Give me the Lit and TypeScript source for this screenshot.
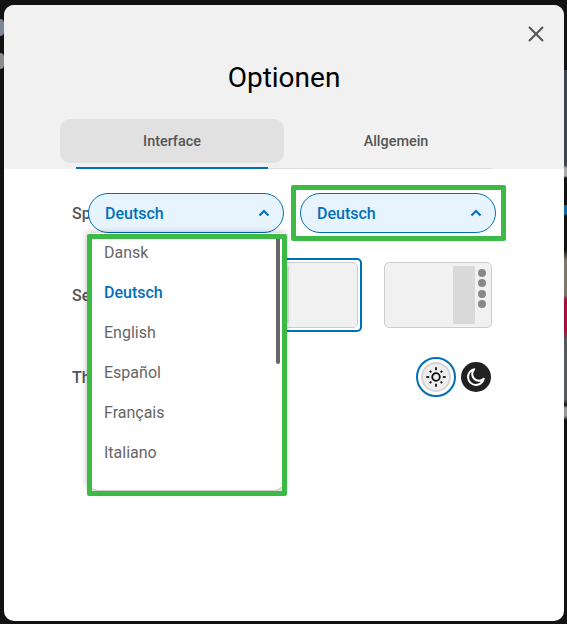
import { LitElement, html, css, svg } from "lit";
import { customElement } from "lit/decorators.js";

const chevron = html`<svg class="chev" width="12" height="8" viewBox="0 0 12 8"><path d="M1.500 6.500 6 2l4.500 4.500" fill="none" stroke="#0070bb" stroke-width="2"/></svg>`;

const rays = [0, 45, 90, 135, 180, 225, 270, 315].map((a) =>
  a % 90 === 0
    ? svg`<line x1="10" y1="3.200" x2="10" y2="0.300" transform="rotate(${a} 10 10)" stroke="#111" stroke-width="1.800"/>`
    : svg`<line x1="10" y1="3.400" x2="10" y2="1.200" transform="rotate(${a} 10 10)" stroke="#111" stroke-width="1.800"/>`
);

@customElement("app-root")
export class AppRoot extends LitElement {
  static styles = css`
    :host { display: block; width: 567px; height: 624px; position: relative; overflow: hidden; background: #121212; font-family: Roboto, sans-serif; }
    .strip { position: absolute; top: 0; right: 0; width: 3px; height: 624px;
      background: linear-gradient(#121212 0 70px, #3a444c 70px 165px, #aaa 168px 176px, #111 178px 205px, #0a6a9c 205px 214px, #111 216px 250px, #7c7666 260px 295px, #a50f3c 300px 330px, #55585c 340px 400px, #111 405px, #999 408px 416px, #111 420px); }
    .bit { position: absolute; left: 0; width: 4px; background: #7c8792; }
    .bit1 { top: 19px; height: 17px; border-radius: 0 4px 4px 0; }
    .bit2 { top: 53px; height: 16px; border-radius: 0 8px 8px 0; background: #8a8f8a; }
    .modal { position: absolute; left: 4px; top: 5px; width: 560px; height: 616px; background: #fff; border-radius: 10px; overflow: hidden; }
    .head { height: 164px; background: #f1f1f1; position: relative; display: flex; flex-direction: column; align-items: center; }
    .close { position: absolute; top: 20px; right: 19px; width: 18px; height: 18px; }
    h1 { margin: 56px 0 0; height: 34px; font-size: 28px; line-height: 34px; font-weight: 400; color: #000; }
    .tabs { margin-top: 24px; display: flex; width: 448px; height: 50px; position: relative; }
    .tabs::after { content: ""; position: absolute; left: 16px; right: 16px; bottom: 0; height: 1px; background: #ddd; }
    .tab { flex: 1; position: relative; font-size: 14.400px; font-weight: 500; color: #555; }
    .tab span { height: 44px; display: flex; align-items: center; justify-content: center; border-radius: 10px; }
    .tab.on::after { content: ""; position: absolute; left: 16px; right: 16px; bottom: 0; height: 2.500px; background: #0070b5; z-index: 1; }
    .tab.on span { background: #e1e1e1; }
    .body { padding: 24px 68px 0; display: flex; flex-direction: column; gap: 25px; }
    .row { display: flex; justify-content: space-between; align-items: center; }
    .label { font-size: 16px; font-weight: 500; color: #555; }
    .select { width: 196px; height: 40px; box-sizing: border-box; border: 1px solid #0070b5; border-bottom-width: 1.500px; border-radius: 20px; background: #e8f4fd; color: #0070bb; font-size: 16px; font-weight: 500; display: flex; align-items: center; justify-content: space-between; padding: 0 13px 0 16px; }
    .previews { display: flex; gap: 18px; }
    .item { box-sizing: border-box; width: 116px; height: 74px; padding: 2px; border: 2px solid transparent; border-radius: 5px; }
    .item.on { border-color: #0070b5; }
    .preview { height: 100%; box-sizing: border-box; border: 1px solid #ccc; border-radius: 5px; background: #f1f1f1; display: flex; gap: 3px; padding: 3px 5px 3px 0; justify-content: flex-end; }
    .preview.flip { flex-direction: row-reverse; padding: 3px 0 3px 5px; }
    .panel { width: 22px; background: #d9d9d9; border-radius: 2px; }
    .dots { width: 8px; display: flex; flex-direction: column; gap: 2.500px; padding-top: 2.500px; }
    .dots i { width: 8px; height: 8px; border-radius: 50%; background: #888; display: block; }
    .themes { display: flex; }
    .t { width: 40px; height: 40px; box-sizing: border-box; border-radius: 50%; display: flex; align-items: center; justify-content: center; }
    .t.sun { border: 2px solid #0070b5; }
    .sun div { width: 30px; height: 30px; box-sizing: border-box; border-radius: 50%; background: #eee; border: 2px solid #d5d5d5; display: flex; align-items: center; justify-content: center; }
    .moon div { width: 30px; height: 30px; border-radius: 50%; background: #222; display: flex; align-items: center; justify-content: center; }
    .open { position: absolute; left: 84px; top: 188px; width: 196px; }
    .drop { position: absolute; left: 0; top: 40px; width: 100%; height: 257px; background: #fff; border-radius: 0 0 10px 10px; box-shadow: 0 1px 6px 1px rgba(0,0,0,.3); overflow: hidden; }
    .opt { height: 40px; padding-left: 16px; display: flex; align-items: center; font-size: 16px; color: #666; }
    .opt:first-child { margin-top: -1px; }
    .opt.on { color: #0070bb; font-weight: 500; }
    .bar { position: absolute; top: 4px; right: 4px; width: 4px; height: 127px; border-radius: 2px; background: #666; }
    .mark { position: absolute; box-sizing: border-box; border: 5px solid #3cba45; border-radius: 2px; }
    .m1 { left: 291px; top: 185px; width: 215px; height: 56px; }
    .m2 { left: 87px; top: 234px; width: 200px; height: 262px; }
  `;

  render() {
    return html`
      <div class="strip"></div>
      <div class="bit bit1"></div>
      <div class="bit bit2"></div>
      <div class="modal">
        <div class="head">
          <svg class="close" viewBox="0 0 18 18"><path d="M2 2 16 16M16 2 2 16" stroke="#555" stroke-width="2" fill="none"/></svg>
          <h1>Optionen</h1>
          <div class="tabs">
            <div class="tab on"><span>Interface</span></div>
            <div class="tab"><span>Allgemein</span></div>
          </div>
        </div>
        <div class="body">
          <div class="row">
            <div class="label">Sprache</div>
            <div class="select">Deutsch ${chevron}</div>
          </div>
          <div class="row">
            <div class="label">Seitenleiste</div>
            <div class="previews">
              <div class="item on"><div class="preview flip"><div class="panel"></div><div class="dots"><i></i><i></i><i></i><i></i></div></div></div>
              <div class="item"><div class="preview"><div class="panel"></div><div class="dots"><i></i><i></i><i></i><i></i></div></div></div>
            </div>
          </div>
          <div class="row">
            <div class="label">Thema</div>
            <div class="themes">
              <div class="t sun"><div>
                <svg width="20" height="20" viewBox="0 0 20 20"><circle cx="10" cy="10" r="3.800" fill="none" stroke="#111" stroke-width="1.800"/>${rays}</svg>
              </div></div>
              <div class="t moon"><div>
                <svg width="22" height="22" viewBox="0 0 24 24"><path d="M10 3.500a8.700 8.700 0 1 0 10.500 10.500 7 7 0 0 1-10.500-10.500z" fill="none" stroke="#fff" stroke-width="2.200" stroke-linejoin="round"/></svg>
              </div></div>
            </div>
          </div>
        </div>
        <div class="open">
          <div class="select">Deutsch ${chevron}</div>
          <div class="drop">
            <div class="opt">Dansk</div>
            <div class="opt on">Deutsch</div>
            <div class="opt">English</div>
            <div class="opt">Español</div>
            <div class="opt">Français</div>
            <div class="opt">Italiano</div>
            <div class="bar"></div>
          </div>
        </div>
      </div>
      <div class="mark m1"></div>
      <div class="mark m2"></div>
    `;
  }
}
